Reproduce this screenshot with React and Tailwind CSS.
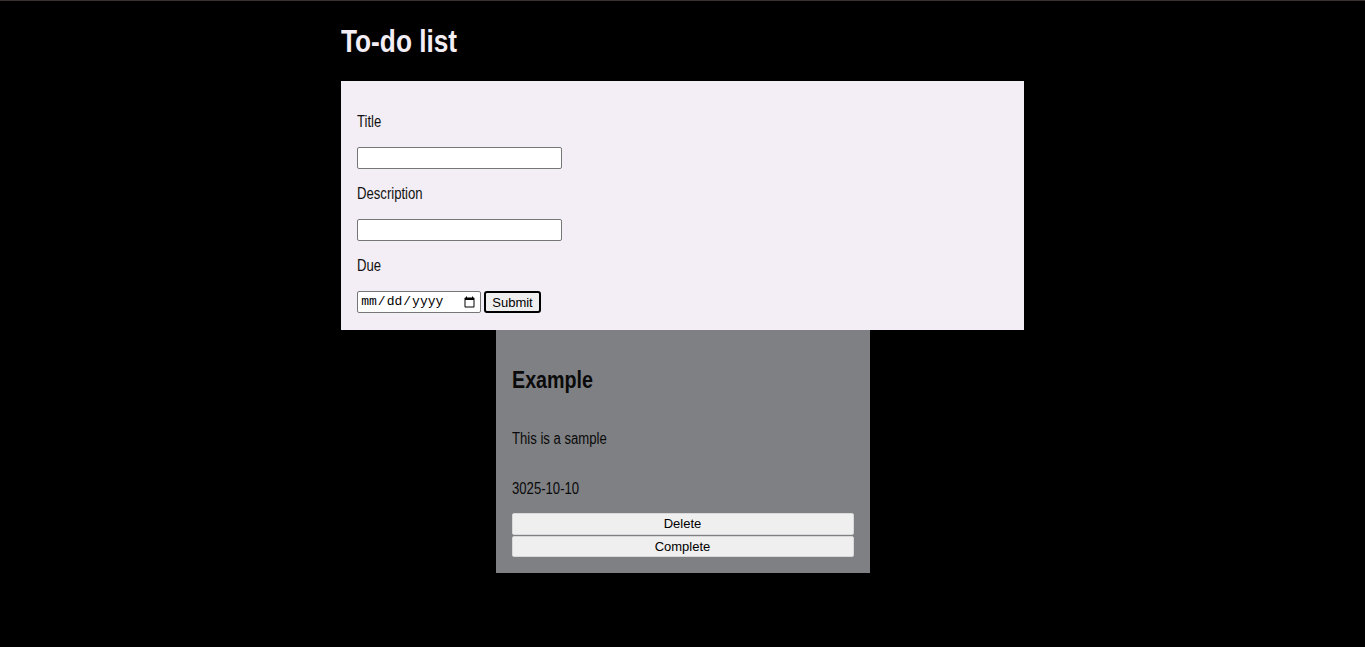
import React from 'react';

// Arial Narrow is not installed: squeeze Liberation Sans to its width instead
const narrow = "font-['Liberation_Sans',Arial,sans-serif] origin-left scale-x-[0.82]";

const Field = ({ label, children }) => (
  <>
    <label className={`block text-base leading-[18px] ${narrow}`}>{label}</label>
    {children}
  </>
);

const TodoCard = ({ todo }) => (
  <div className="w-[374px] mx-auto bg-[#7f8084] px-4 pt-4 pb-4 flex flex-col text-[#0a0a0a]">
    <h2 className={`text-2xl font-bold leading-[28px] mt-5 mb-5 ${narrow}`}>{todo.title}</h2>
    <p className={`text-base leading-[18px] my-4 ${narrow}`}>{todo.description}</p>
    <p className={`text-base leading-[18px] mt-4 mb-[15px] ${narrow}`}>{todo.due}</p>
    <button className="font-['Liberation_Sans',Arial,sans-serif] text-[13px] h-[22px] bg-[#efefef] border border-[#d8d8d8] rounded-[2px] text-black">
      Delete
    </button>
    <button className="font-['Liberation_Sans',Arial,sans-serif] text-[13px] h-[21px] mt-px bg-[#efefef] border border-[#d8d8d8] rounded-[2px] text-black">
      Complete
    </button>
  </div>
);

export default function App() {
  const todos = [{ id: 1, title: 'Example', description: 'This is a sample', due: '3025-10-10' }];

  return (
    <div className="min-h-[647px] bg-black border-t border-[#3a302f] font-['Liberation_Sans',Arial,sans-serif]">
      <div className="w-1/2 mx-auto">
        <h1 className={`text-[32px] font-bold leading-[37px] text-[#f3eef5] pt-[22px] pb-[21px] ${narrow}`}>To-do list</h1>
        <form className="bg-[#f3eef5] px-4 pt-8 pb-[17px] flex flex-col items-start gap-4 text-[#111]" onSubmit={e => e.preventDefault()}>
          <Field label="Title">
            <input type="text" className="w-[205px] h-[22px] bg-white border border-[#767676] rounded-[2px] px-0.5 text-[13px]" />
          </Field>
          <Field label="Description">
            <input type="text" className="w-[205px] h-[22px] bg-white border border-[#767676] rounded-[2px] px-0.5 text-[13px]" />
          </Field>
          <Field label="Due">
            <div className="flex items-center gap-[3px]">
              <input type="date" className="w-[124px] h-[22px] bg-white border border-[#767676] rounded-[2px] px-0.5 text-[13px] font-['Liberation_Mono',monospace] text-black" />
              <button type="submit" className="h-[22px] px-[6px] bg-[#efefef] border-2 border-black rounded-[3px] text-[13px] text-black font-['Liberation_Sans',Arial,sans-serif]">
                Submit
              </button>
            </div>
          </Field>
        </form>
        {todos.map(todo => (
          <TodoCard key={todo.id} todo={todo} />
        ))}
      </div>
    </div>
  );
}
